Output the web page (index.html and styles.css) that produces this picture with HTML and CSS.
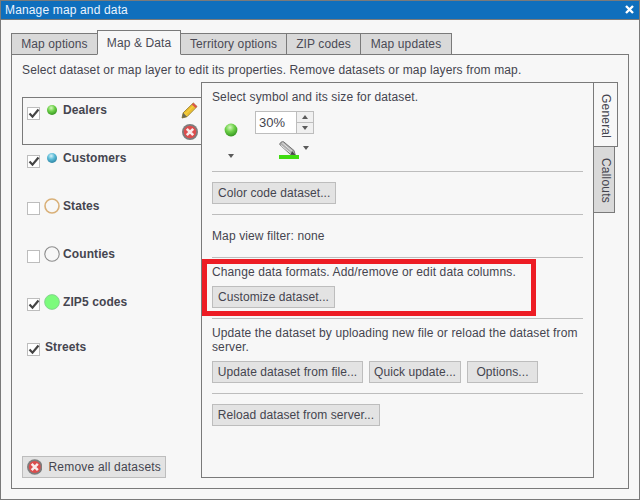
FILE: index.html
```html
<!DOCTYPE html>
<html lang="en">
<head>
<meta charset="utf-8">
<title>Manage map and data</title>
<link rel="stylesheet" href="styles.css">
</head>
<body>
<svg class="defs" width="0" height="0" aria-hidden="true">
  <defs>
    <radialGradient id="gball" cx="0.42" cy="0.3" r="0.75">
      <stop offset="0" stop-color="#d6f7c0"/><stop offset="0.45" stop-color="#6fd24a"/><stop offset="1" stop-color="#2f8f1c"/>
    </radialGradient>
    <radialGradient id="bball" cx="0.42" cy="0.3" r="0.75">
      <stop offset="0" stop-color="#d5f1f8"/><stop offset="0.45" stop-color="#5cbcd8"/><stop offset="1" stop-color="#2a7f9e"/>
    </radialGradient>
    <symbol id="remove" viewBox="0 0 16 16">
      <circle cx="8" cy="8" r="8" fill="#7d7d7d"/>
      <circle cx="8" cy="8" r="6.2" fill="#dd4d4d"/>
      <path d="M4.8 4.8l6.4 6.4M11.2 4.8l-6.4 6.4" stroke="#f8ecec" stroke-width="2.6" fill="none"/>
    </symbol>
    <symbol id="check" viewBox="0 0 13 13">
      <path d="M2.5 6.5l3 3.2L11.5 2.5" stroke="#444" stroke-width="2.2" fill="none"/>
    </symbol>
  </defs>
</svg>
<div class="window">
  <header class="titlebar">
    <span>Manage map and data</span>
    <svg class="close" width="9" height="9" viewBox="0 0 9 9"><path d="M1 1l7 7M8 1l-7 7" stroke="#fff" stroke-width="2.4"/></svg>
  </header>
  <div class="body">
    <nav class="tabs">
      <span class="tab t1">Map options</span>
      <span class="tab active t2">Map &amp; Data</span>
      <span class="tab t3">Territory options</span>
      <span class="tab t4">ZIP codes</span>
      <span class="tab t5">Map updates</span>
    </nav>
    <main class="tabpanel">
      <p class="intro">Select dataset or map layer to edit its properties. Remove datasets or map layers from map.</p>
      <div class="content">
        <aside class="list">
          <div class="row selected">
            <span class="cb"><svg width="13" height="13"><use href="#check"/></svg></span>
            <svg class="sym" width="16" height="16" viewBox="0 0 16 16"><circle cx="8" cy="8" r="5" fill="url(#gball)"/></svg>
            <span class="label">Dealers</span>
            <span class="rowtools">
              <svg width="17" height="17" viewBox="0 0 17 17">
                <path d="M1 16l1.2-5.2L12.3 1l3.7 3.6L6 14.7z" fill="#f4cc3a" stroke="#8a6d1a" stroke-width=".8"/>
                <path d="M4 10.5l9-9M6 12.5l9-9" stroke="#d9a520" stroke-width=".7"/>
                <path d="M12.3 1l3.7 3.6-1.5 1.5-3.7-3.6z" fill="#d9534f"/>
                <path d="M1 16l1.2-5.2 3.8 3.9z" fill="#6a6a55"/>
              </svg>
              <svg width="16" height="16"><use href="#remove"/></svg>
            </span>
          </div>
          <div class="row r-customers">
            <span class="cb"><svg width="13" height="13"><use href="#check"/></svg></span>
            <svg class="sym" width="16" height="16" viewBox="0 0 16 16"><circle cx="8" cy="8" r="5" fill="url(#bball)"/></svg>
            <span class="label">Customers</span>
          </div>
          <div class="row">
            <span class="cb"></span>
            <svg class="sym" width="16" height="16" viewBox="0 0 16 16"><circle cx="8" cy="8" r="7" fill="none" stroke="#d9b078" stroke-width="1.6"/></svg>
            <span class="label">States</span>
          </div>
          <div class="row">
            <span class="cb"></span>
            <svg class="sym" width="16" height="16" viewBox="0 0 16 16"><circle cx="8" cy="8" r="7.2" fill="none" stroke="#8c8c8c" stroke-width="1.1"/></svg>
            <span class="label">Counties</span>
          </div>
          <div class="row">
            <span class="cb"><svg width="13" height="13"><use href="#check"/></svg></span>
            <svg class="sym" width="16" height="16" viewBox="0 0 16 16"><circle cx="8" cy="8" r="7.4" fill="#7cfb7c" stroke="#7fc98a" stroke-width=".8"/></svg>
            <span class="label">ZIP5 codes</span>
          </div>
          <div class="row plain">
            <span class="cb"><svg width="13" height="13"><use href="#check"/></svg></span>
            <span class="label">Streets</span>
          </div>
          <button class="btn removeall"><svg width="16" height="16"><use href="#remove"/></svg>Remove all datasets</button>
        </aside>
        <section class="panel">
          <div class="sec sec-symbol">
            <p>Select symbol and its size for dataset.</p>
            <div class="symrow">
              <div class="ballpick">
                <svg width="14" height="14" viewBox="0 0 14 14"><circle cx="7" cy="7" r="6.4" fill="url(#gball)"/></svg>
                <span class="caret"></span>
              </div>
              <div class="sizepick">
                <div class="spinner">
                  <span class="spinval">30%</span>
                  <span class="spinbtns">
                    <span class="spinbtn"><span class="caret up"></span></span>
                    <span class="spinbtn"><span class="caret"></span></span>
                  </span>
                </div>
                <div class="colorpick">
                  <span class="swatch">
                    <svg width="17" height="14" viewBox="0 0 17 14">
                      <path d="M.7 3.5C1 1.5 2.5.5 4.5.7L15 9.5 16.3 14 11.5 13.5z" fill="#b0b0b0" stroke="#6a6a6a" stroke-width=".9"/>
                      <path d="M3.2 1.8l10 8.6M1.8 4.2l9.4 7.6" stroke="#e6e6e6" stroke-width="1"/>
                      <path d="M13 10l3.3 4-4.6-.5z" fill="#444"/>
                    </svg>
                    <span class="greenbar"></span>
                  </span>
                  <span class="caret"></span>
                </div>
              </div>
            </div>
          </div>
          <div class="sec sec-color"><button class="btn">Color code dataset...</button></div>
          <div class="sec sec-filter"><p>Map view filter: none</p></div>
          <div class="sec sec-custom">
            <p>Change data formats. Add/remove or edit data columns.</p>
            <button class="btn">Customize dataset...</button>
          </div>
          <div class="sec sec-update">
            <p>Update the dataset by uploading new file or reload the dataset from server.</p>
            <div class="btnrow">
              <button class="btn w151">Update dataset from file...</button>
              <button class="btn w92">Quick update...</button>
              <button class="btn w71">Options...</button>
            </div>
          </div>
          <div class="sec sec-reload"><button class="btn w168">Reload dataset from server...</button></div>
          <div class="redbox"></div>
        </section>
        <div class="sidetabs">
          <span class="stab active">General</span>
          <span class="stab">Callouts</span>
        </div>
      </div>
    </main>
  </div>
</div>
</body>
</html>
```
FILE: styles.css
```css
* { box-sizing: border-box; }
html, body { margin: 0; padding: 0; }
body { width: 640px; height: 500px; background: #f7f7f7; font: 12px/14px "Liberation Sans", Arial, sans-serif; color: #45454f; overflow: hidden; }
p { margin: 0; }
.defs { position: absolute; }
.window { width: 640px; height: 500px; border: 1px solid #7a7a7a; display: flex; flex-direction: column; background: #f7f7f7; }
.titlebar { height: 19px; background: #0f6fbd; border-bottom: 1px solid #7a7a7a; color: #eaf4ff; display: flex; align-items: center; justify-content: space-between; padding: 0 5px 1px 4px; letter-spacing: .15px; flex: none; }
.close { display: block; }
.body { flex: 1; display: flex; flex-direction: column; padding: 10px; min-height: 0; }
.tabs { display: flex; align-items: flex-end; height: 25px; flex: none; position: relative; z-index: 1; margin-bottom: -1px; }
.tab { height: 22px; background: #d9d9d9; border: 1px solid #7a7a7a; border-left: 0; display: flex; align-items: center; justify-content: center; letter-spacing: .1px; color: #4a4a55; }
.t1 { width: 87px; border-left: 1px solid #7a7a7a; }
.t2 { width: 83px; }
.t3 { width: 106px; }
.t4 { width: 74px; }
.t5 { width: 91px; }
.tab.active { height: 25px; background: #f7f7f7; border-left: 1px solid #7a7a7a; border-bottom-color: #f7f7f7; margin-left: -1px; width: 84px; }
.tabpanel { flex: 1; border: 1px solid #7a7a7a; padding: 8px 10px 10px 10px; display: flex; flex-direction: column; min-height: 0; }
.intro { letter-spacing: .13px; height: 19px; flex: none; }
.content { flex: 1; display: flex; min-height: 0; }
.list { width: 179px; flex: none; padding-top: 15px; display: flex; flex-direction: column; }
.row { height: 48px; display: flex; align-items: flex-start; padding-left: 5px; position: relative; flex: none; }
.row.r-customers { height: 47px; }
.row.r-customers .sym { margin-top: 5px; }
.row.r-customers .label { margin-top: 6px; }
.row.selected { border: 1px solid #7a7a7a; border-right: 0; padding-left: 4px; }
.cb { width: 13px; height: 13px; margin-top: 10px; border: 1px solid #bdbdbd; background: #fff; display: block; flex: none; position: relative; }
.cb svg { position: absolute; left: -1px; top: -1px; }
.sym { margin: 6px 3px 0 4px; flex: none; }
.label { font-weight: bold; margin-top: 7px; letter-spacing: .1px; }
.row.selected .cb { margin-top: 9px; }
.row.selected .sym { margin-top: 4px; }
.row.selected .label { margin-top: 5px; }
.row.plain { height: 40px; }
.row.plain .cb { margin-top: 7px; }
.row.plain .label { margin: 4px 0 0 5px; }
.rowtools { margin-left: auto; display: flex; flex-direction: column; align-items: flex-end; gap: 5px; padding: 4px 3px 0 0; }
.rowtools svg { display: block; }
.btn { height: 22px; padding: 0 5px; border: 1px solid #bdbdbd; background: #e3e3e3; font: inherit; color: #45454f; letter-spacing: .08px; display: inline-flex; align-items: center; justify-content: center; white-space: nowrap; }
.removeall { margin-top: auto; width: 144px; padding: 0 4px; gap: 6px; letter-spacing: .2px; }
.panel { width: 393px; flex: none; border: 1px solid #7a7a7a; background: #f7f7f7; padding: 0 10px; position: relative; display: flex; flex-direction: column; }
.panel p { letter-spacing: .12px; }
.sec { border-bottom: 1px solid #bdbdbd; flex: none; }
.sec-symbol { height: 89px; padding-top: 7px; }
.symrow { display: flex; }
.ballpick { width: 43px; padding: 19px 0 0 12px; display: flex; flex-direction: column; }
.ballpick svg { display: block; }
.ballpick .caret { margin: 17px 0 0 4px; }
.sizepick { padding-top: 7px; }
.spinner { width: 59px; height: 23px; background: #fff; border: 1px solid #bdbdbd; display: flex; }
.spinval { width: 40px; line-height: 22px; padding-left: 3px; font-size: 13px; }
.spinbtns { flex: 1; display: flex; flex-direction: column; border-left: 1px solid #bdbdbd; }
.spinbtn { flex: 1; display: flex; align-items: center; justify-content: center; background: #f0f0f0; }
.spinbtn + .spinbtn { border-top: 1px solid #bdbdbd; }
.colorpick { display: flex; align-items: center; margin: 7px 0 0 24px; }
.swatch { width: 20px; display: block; }
.swatch svg { display: block; }
.greenbar { display: block; height: 4px; background: #3fdc10; }
.caret { display: block; width: 0; height: 0; border: 3.5px solid transparent; border-top: 4px solid #5a5a5a; border-bottom: 0; }
.caret.up { border-top: 0; border-bottom: 4px solid #5a5a5a; }
.colorpick .caret { margin: 0 0 5px 4px; }
.sec-color { height: 43px; padding-top: 10px; }
.sec-filter { height: 43px; padding-top: 14px; }
.sec-custom { height: 61px; padding-top: 7px; }
.sec-custom .btn { margin-top: 7px; }
.sec-update { height: 75px; padding-top: 7px; }
.btnrow { display: flex; gap: 6px; margin-top: 7px; }
.w71 { width: 71px; }
.w92 { width: 92px; }
.w151 { width: 151px; }
.w168 { width: 168px; }
.sec-reload { border-bottom: 0; padding-top: 10px; }
.redbox { position: absolute; left: 0; top: 176px; width: 334px; height: 57px; border: 5px solid #ed1c24; pointer-events: none; }
.sidetabs { display: flex; flex-direction: column; align-items: flex-start; flex: none; margin-left: -1px; position: relative; z-index: 1; }
.stab { writing-mode: vertical-rl; width: 22px; height: 67px; background: #d9d9d9; border: 1px solid #7a7a7a; padding-top: 11px; letter-spacing: .2px; line-height: 17px; }
.stab.active { width: 25px; height: 65px; background: #f7f7f7; padding-right: 3px; margin-bottom: -1px; }
```
